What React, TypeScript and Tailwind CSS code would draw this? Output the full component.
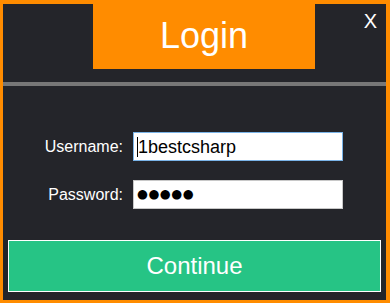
import React from 'react';

export default function App() {
  return (
    <div
      className="w-[390px] h-[303px] bg-[#24252a] border-[#ff8c00] border-t-4 border-r-4 border-b-[3px] border-l-[3px] flex flex-col"
      style={{ fontFamily: '"Liberation Sans", Arial, sans-serif' }}
    >
      {/* header */}
      <div className="h-[78px] flex items-start">
        <div className="w-[90px]" />
        <div className="w-[222px] h-[65px] bg-[#ff8c00] flex items-center justify-center">
          <span className="text-white text-[36px] leading-none -mt-[2px]">Login</span>
        </div>
        <div className="flex-1 flex justify-end pr-[9px] pt-[7px]">
          <span className="text-white text-[20px] leading-none cursor-pointer">X</span>
        </div>
      </div>
      <div className="h-[4px] bg-[#777777]" />

      {/* form */}
      <div className="pt-[46px] flex flex-col gap-[19px]">
        <div className="flex items-center">
          <label className="w-[121px] text-right text-white text-[16px] pr-px">Username:</label>
          <div className="ml-[9px] w-[210px] h-[29px] bg-white border border-[#7ab4e8] flex items-center pl-[3px]">
            <span className="w-px h-[20px] bg-black" />
            <span className="text-black text-[18px] leading-none">1bestcsharp</span>
          </div>
        </div>
        <div className="flex items-center">
          <label className="w-[121px] text-right text-white text-[16px] pr-px">Password:</label>
          <div className="ml-[9px] w-[210px] h-[29px] bg-white border border-[#c8c8c8] flex items-center pl-[3px]">
            <span
              className="text-black text-[12.5px] leading-none tracking-[0.5px]"
              style={{ fontFamily: '"DejaVu Sans", sans-serif' }}
            >
              ●●●●●
            </span>
          </div>
        </div>
      </div>

      {/* button */}
      <button className="mt-[31px] mx-[5px] h-[52px] bg-[#26c485] border border-white text-white text-[24px] leading-none cursor-pointer">
        Continue
      </button>
    </div>
  );
}
